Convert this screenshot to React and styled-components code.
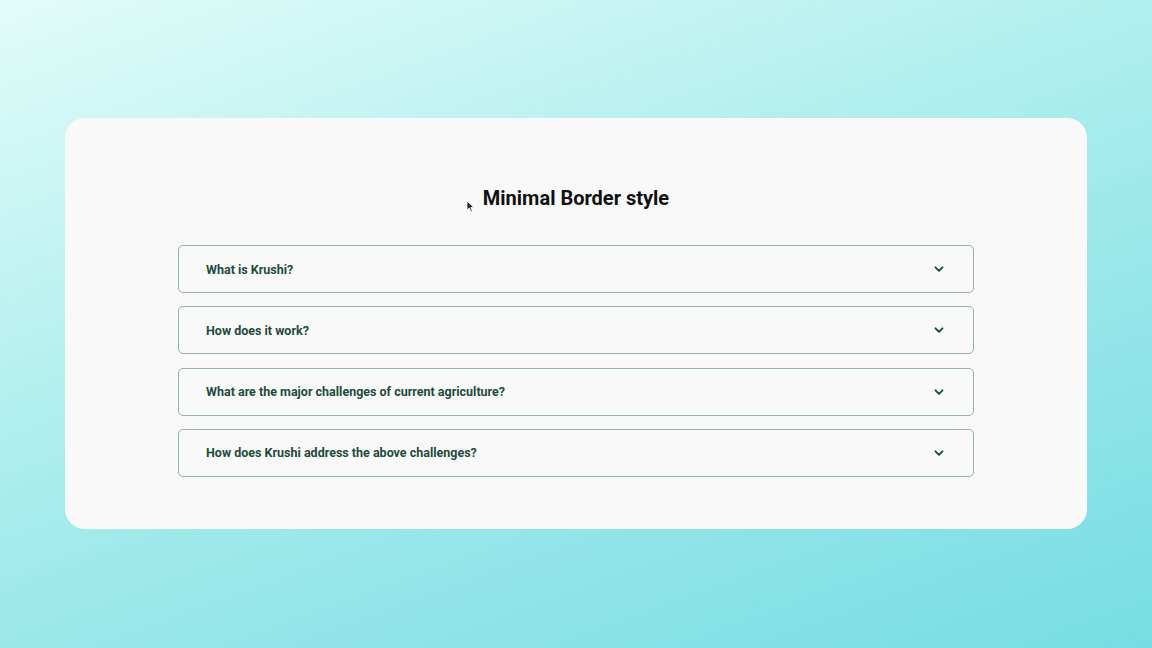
import React from 'react';
import styled, { createGlobalStyle } from 'styled-components';

const GlobalStyle = createGlobalStyle`
  html, body {
    margin: 0;
    padding: 0;
  }
  body {
    font-family: Roboto, "Liberation Sans", Arial, sans-serif;
  }
`;

const Page = styled.div`
  min-height: 100vh;
  height: 648px;
  box-sizing: border-box;
  padding: 118px 65px 0;
  background: linear-gradient(160deg, #e2fcf8 0%, #b6f0f0 35%, #96e6e9 65%, #77dde2 100%);
`;

const Card = styled.section`
  position: relative;
  box-sizing: border-box;
  height: 411px;
  padding-top: 68px;
  background: #f9f9f9;
  border-radius: 20px;
  display: flex;
  flex-direction: column;
  align-items: center;
`;

const Title = styled.h2`
  margin: 0;
  height: 24px;
  font-size: 20px;
  line-height: 24px;
  font-weight: 700;
  color: #111;
`;

const Cursor = styled.svg`
  position: absolute;
  left: 401px;
  top: 82px;
`;

const List = styled.div`
  margin-top: 35px;
  width: 796px;
  display: flex;
  flex-direction: column;
  gap: 13.3px;
`;

const Item = styled.button`
  box-sizing: border-box;
  height: 48px;
  width: 100%;
  display: flex;
  align-items: center;
  justify-content: space-between;
  padding: 0 28px 0 27px;
  background: transparent;
  border: 1.3px solid #96b2ab;
  border-radius: 5px;
  font-family: inherit;
  font-size: 12.5px;
  font-weight: 700;
  color: #1e4a3d;
  text-align: left;
  cursor: pointer;
`;

const Chevron = () => (
  <svg width="12" height="12" viewBox="0 0 12 12" fill="none">
    <path d="M2.5 4.3 L6 7.8 L9.5 4.3" stroke="#1e4a3d" strokeWidth="1.9" strokeLinecap="round" strokeLinejoin="round" />
  </svg>
);

const questions = [
  'What is Krushi?',
  'How does it work?',
  'What are the major challenges of current agriculture?',
  'How does Krushi address the above challenges?',
];

export default function App() {
  return (
    <>
      <GlobalStyle />
      <Page>
        <Card>
          <Cursor width="9" height="13" viewBox="0 0 9 13">
            <path d="M1 1 L1 10 L3.3 8 L5 12 L6.4 11.3 L4.8 7.5 L7.8 7.5 Z" fill="#222" stroke="#fff" strokeWidth="0.8" />
          </Cursor>
          <Title>Minimal Border style</Title>
          <List>
            {questions.map((q) => (
              <Item key={q}>
                <span>{q}</span>
                <Chevron />
              </Item>
            ))}
          </List>
        </Card>
      </Page>
    </>
  );
}
